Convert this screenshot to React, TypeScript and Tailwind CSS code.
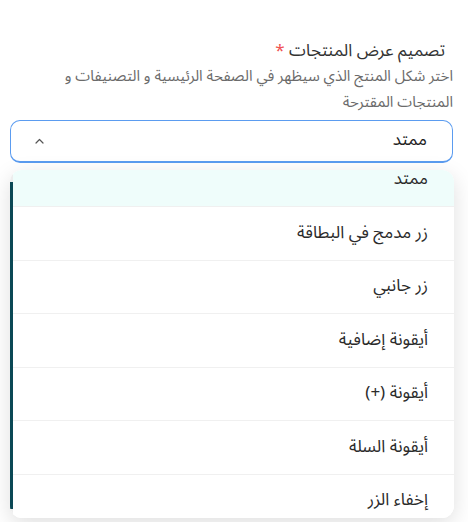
import React from "react";

const items = [
  "ممتد",
  "زر مدمج في البطاقة",
  "زر جانبي",
  "أيقونة إضافية",
  "أيقونة (+)",
  "أيقونة السلة",
  "إخفاء الزر",
];

export default function App() {
  return (
    <div
      dir="rtl"
      className="w-[468px] h-[522px] bg-white overflow-hidden font-['Noto_Sans_Arabic','Noto_Sans','DejaVu_Sans',sans-serif]"
    >
      <div className="pt-[39px] pr-[15px] pl-[10px]">
        <div className="pr-[8px] text-[17px] leading-[24px] text-[#333333]">
          تصميم عرض المنتجات <span className="text-[#f05252]">*</span>
        </div>
        <p className="pl-[22px] text-[15px] leading-[26px] text-[#6b6b6b]">
          اختر شكل المنتج الذي سيظهر في الصفحة الرئيسية و التصنيفات و المنتجات المقترحة
        </p>
        <div className="mt-[5px] h-[43px] flex items-center justify-between rounded-[10px] border border-b-2 border-[#5b9cf0] bg-white pr-[25px] pl-[24px]">
          <span className="text-[17px] text-[#222222]">ممتد</span>
          <svg width="9" height="6" viewBox="0 0 9 6" fill="none" className="mt-[-1px]">
            <path d="M1 5 L4.5 1.5 L8 5" stroke="#555" strokeWidth="1.2" strokeLinecap="round" strokeLinejoin="round" />
          </svg>
        </div>
        <div
          dir="ltr"
          className="mt-[7px] mr-[-1px] h-[348px] flex rounded-[12px] bg-white overflow-hidden shadow-[0_6px_22px_rgba(0,0,0,0.13)]"
        >
          <div className="w-[4px] ml-[-1px] flex flex-col bg-[#ededed] pt-[12px] pb-[9px]">
            <div className="flex-1 bg-[#0b4855]" />
          </div>
          <div dir="rtl" className="flex-1 overflow-hidden">
            <div className="mt-[-16.5px]">
              {items.map((it, i) => (
                <div
                  key={it}
                  className={`h-[53.5px] flex items-center pr-[26px] text-[17px] text-[#2b2b2b] border-b border-[#f0f0f0] ${
                    i === 0 ? "bg-[#effdfb]" : "bg-white"
                  }`}
                >
                  {it}
                </div>
              ))}
            </div>
          </div>
        </div>
      </div>
    </div>
  );
}
